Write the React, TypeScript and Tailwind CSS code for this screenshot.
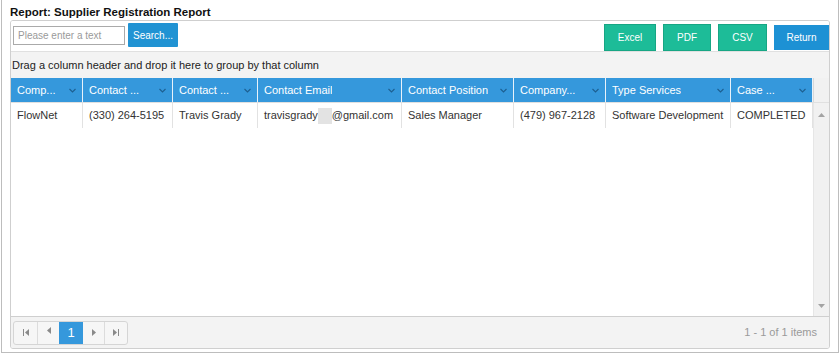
import { useState } from 'react';

const columns = [
  { title: 'Comp...', width: 'w-[72px]' },
  { title: 'Contact ...', width: 'w-[90px]' },
  { title: 'Contact ...', width: 'w-[85px]' },
  { title: 'Contact Email', width: 'w-[144px]' },
  { title: 'Contact Position', width: 'w-[112px]' },
  { title: 'Company...', width: 'w-[92px]' },
  { title: 'Type Services', width: 'w-[125px]' },
  { title: 'Case ...', width: 'w-[82px]' },
];

function Chevron() {
  return (
    <svg width="7" height="5" viewBox="0 0 7 5" className="shrink-0">
      <path d="M0.5 1 L3.5 4 L6.5 1" fill="none" stroke="#1c5f91" strokeWidth="1.1" />
    </svg>
  );
}

function PagerIcon({ kind }: { kind: 'first' | 'prev' | 'next' | 'last' }) {
  return (
    <svg width="8" height="7" viewBox="0 0 8 7" fill="#8a8a8a">
      {kind === 'first' && (
        <>
          <rect x="1" y="0" width="1" height="7" />
          <path d="M7 0 L3 3.5 L7 7 Z" />
        </>
      )}
      {kind === 'prev' && <path d="M6 0 L2 3.5 L6 7 Z" />}
      {kind === 'next' && <path d="M2 0 L6 3.5 L2 7 Z" />}
      {kind === 'last' && (
        <>
          <path d="M1 0 L5 3.5 L1 7 Z" />
          <rect x="6" y="0" width="1" height="7" />
        </>
      )}
    </svg>
  );
}

export default function App() {
  const [query, setQuery] = useState('');

  const row = [
    'FlowNet',
    '(330) 264-5195',
    'Travis Grady',
    null,
    'Sales Manager',
    '(479) 967-2128',
    'Software Development',
    'COMPLETED',
  ];

  return (
    <div className="w-[840px] h-[354px] bg-white font-['Liberation_Sans',Arial,sans-serif] text-[11px] text-[#333]">
      <div className="h-[353px] mx-px border-x border-b border-[#bdbdbd] px-[8px] flex flex-col">
        <h1 className="font-bold text-[11.5px] text-[#111] leading-[14px] pt-[5px] h-[20px]">
          Report: Supplier Registration Report
        </h1>

        <div className="h-[329px] border border-[#cfcfcf] rounded-[3px] flex flex-col overflow-hidden">
          {/* toolbar */}
          <div className="h-[30px] flex items-start bg-white pl-[2px]">
            <input
              value={query}
              onChange={(e) => setQuery(e.target.value)}
              placeholder="Please enter a text"
              className="mt-[5px] w-[112px] h-[19px] border border-[#aaa] px-[4px] text-[10px] text-[#333] placeholder:text-[#9a9a9a] outline-none"
            />
            <button className="ml-[3px] mt-[2px] w-[50px] h-[24px] bg-[#2193d3] text-white text-[10px] rounded-[1px]">
              Search...
            </button>
            <div className="ml-auto flex items-start gap-[7px] mt-[3px]">
              <button className="w-[52px] h-[27px] bg-[#1dbc98] border border-[#17a684] text-white text-[10px]">Excel</button>
              <button className="w-[48px] h-[27px] bg-[#1dbc98] border border-[#17a684] text-white text-[10px]">PDF</button>
              <button className="w-[49px] h-[27px] bg-[#1dbc98] border border-[#17a684] text-white text-[10px]">CSV</button>
              <button className="mt-px w-[55px] h-[25px] bg-[#1d91d4] text-white text-[10px]">Return</button>
            </div>
          </div>

          {/* group panel */}
          <div className="h-[27px] bg-[#f3f3f3] border-t border-[#e0e0e0] flex items-center pl-[1px] text-[#222]">
            Drag a column header and drop it here to group by that column
          </div>

          {/* header */}
          <div className="flex h-[24px] bg-[#f3f3f3]">
            {columns.map((c, i) => (
              <div
                key={i}
                className={`${c.width} shrink-0 bg-[#3598dc] border-r border-[#e8f2fa] flex items-center justify-between pl-[6px] pr-[6px] text-white`}
              >
                <span className="truncate">{c.title}</span>
                <Chevron />
              </div>
            ))}
            <div className="flex-1 bg-[#f1f1f1] border-l border-[#d8d8d8]" />
          </div>

          {/* body */}
          <div className="flex flex-1 min-h-0 border-t border-[#e0e0e0]">
            <div className="flex-1">
              <div className="flex h-[25px]">
                {columns.map((c, i) => (
                  <div
                    key={i}
                    className={`${c.width} shrink-0 border-r border-[#e2e2e2] flex items-center pl-[6px] whitespace-nowrap overflow-hidden`}
                  >
                    {row[i] === null ? (
                      <span className="flex items-center">
                        travisgrady
                        <span className="inline-block w-[14px] h-[16px] bg-[#e3e3e3]" />
                        @gmail.com
                      </span>
                    ) : (
                      row[i]
                    )}
                  </div>
                ))}
              </div>
            </div>
            <div className="w-[16px] bg-[#f1f1f1] border-l border-[#e6e6e6] flex flex-col justify-between items-center pt-[10px] pb-[8px]">
              <svg width="7" height="4" viewBox="0 0 7 4">
                <path d="M0 4 L3.5 0 L7 4 Z" fill="#a3a3a3" />
              </svg>
              <svg width="7" height="4" viewBox="0 0 7 4">
                <path d="M0 0 L3.5 4 L7 0 Z" fill="#a3a3a3" />
              </svg>
            </div>
          </div>

          {/* pager */}
          <div className="h-[32px] bg-[#f3f3f3] border-t border-[#cfcfcf] flex items-center pl-[2px] pr-[12px]">
            <div className="flex h-[24px] border border-[#d5d5d5] rounded-[3px] overflow-hidden bg-[#f6f6f6]">
              <div className="w-[24px] flex items-center justify-center border-r border-[#dcdcdc]">
                <PagerIcon kind="first" />
              </div>
              <div className="w-[21px] flex items-start pt-[5px] justify-center">
                <PagerIcon kind="prev" />
              </div>
              <div className="w-[24px] bg-[#3598dc] text-white text-[13px] flex items-center justify-center">1</div>
              <div className="w-[22px] flex items-center justify-center border-r border-[#dcdcdc]">
                <PagerIcon kind="next" />
              </div>
              <div className="w-[22px] flex items-center justify-center">
                <PagerIcon kind="last" />
              </div>
            </div>
            <span className="ml-auto text-[#9a9a9a]">1 - 1 of 1 items</span>
          </div>
        </div>
      </div>
    </div>
  );
}
